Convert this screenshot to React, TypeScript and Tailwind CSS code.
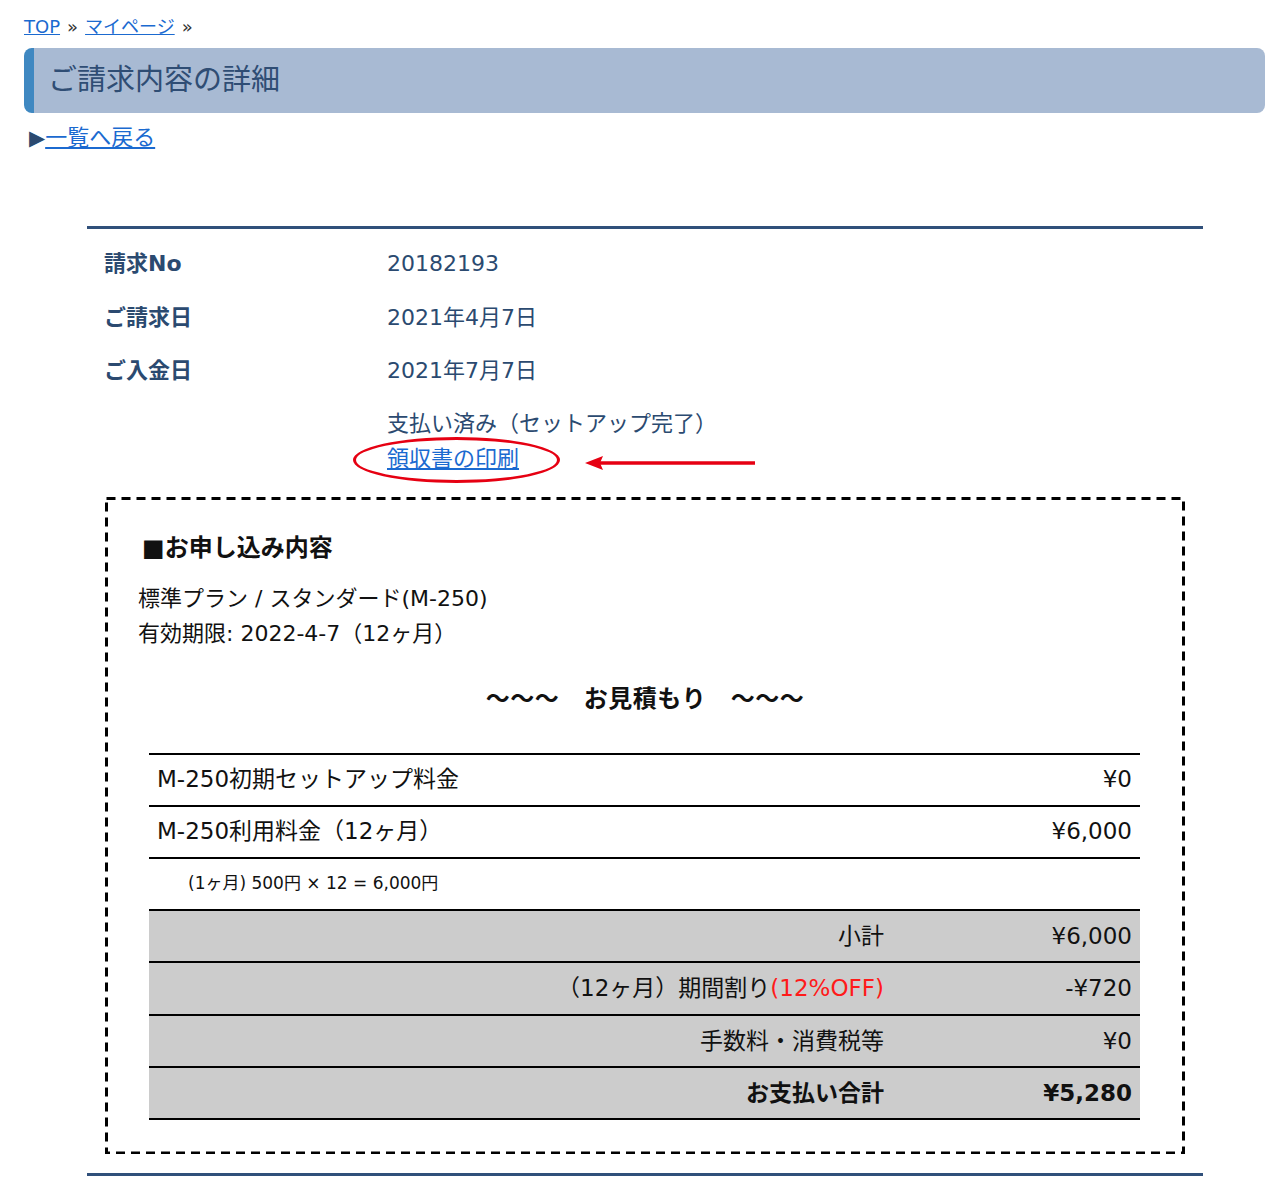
import React from "react";

const font = { fontFamily: '"DejaVu Sans", "Noto Sans CJK JP", sans-serif' };

function InfoRow({ label, value }: { label: string; value: string }) {
  return (
    <div className="flex h-[53.5px] items-center">
      <div className="w-[300px] pl-[17px] font-bold text-[22px] text-[#2b4a70]">{label}</div>
      <div className="text-[22px] text-[#2b4a70]">{value}</div>
    </div>
  );
}

function ItemRow({ label, amount }: { label: string; amount: string }) {
  return (
    <div className="flex h-[52px] items-center justify-between border-t-2 border-black px-[8px] text-[23px] text-[#111]">
      <span>{label}</span>
      <span>{amount}</span>
    </div>
  );
}

function SumRow({
  label,
  amount,
  bold,
  last,
}: {
  label: React.ReactNode;
  amount: string;
  bold?: boolean;
  last?: boolean;
}) {
  return (
    <div
      className={`flex h-[52.5px] items-center border-t-2 border-black bg-[#cccccc] text-[23px] text-[#111] ${
        last ? "h-[54px] border-b-2" : ""
      } ${bold ? "font-bold" : ""}`}
    >
      <div className="flex-1 text-right">{label}</div>
      <div className="w-[256px] pr-[8px] text-right">{amount}</div>
    </div>
  );
}

export default function App() {
  return (
    <div className="min-h-[1203px] w-full bg-white pb-[30px]" style={font}>
      {/* breadcrumb */}
      <div className="flex h-[48px] items-start pl-[24px] pt-[14px] text-[18px] leading-[26px] text-[#333]">
        <a href="#" className="text-[#1b6ad0] underline">TOP</a>
        <span className="mx-[7px]">»</span>
        <a href="#" className="text-[#1b6ad0] underline">マイページ</a>
        <span className="mx-[7px]">»</span>
      </div>

      {/* title */}
      <div className="ml-[24px] mr-[22px] flex h-[65px] items-center rounded-[8px] border-l-[10px] border-[#3f88c1] bg-[#a8bad3] pl-[14px]">
        <h1 className="text-[29px] font-normal text-[#2f4d74]">ご請求内容の詳細</h1>
      </div>

      {/* back link */}
      <div className="mt-[12px] flex items-center pl-[29px] text-[22px] leading-[26px]">
        <span className="text-[#2b4a70] text-[21px] leading-[26px]">▶</span>
        <a href="#" className="text-[#1b6ad0] underline">一覧へ戻る</a>
      </div>

      {/* main section */}
      <div className="ml-[87px] mr-[84px] mt-[75px] border-t-[3px] border-[#30507a] pt-[8px]">
        <InfoRow label="請求No" value="20182193" />
        <InfoRow label="ご請求日" value="2021年4月7日" />
        <InfoRow label="ご入金日" value="2021年7月7日" />
        <div className="flex pt-[8px]">
          <div className="w-[300px]" />
          <div className="text-[22px] leading-[35px] text-[#2b4a70]">
            <div>支払い済み（セットアップ完了）</div>
            <div>
              <span className="relative inline-block">
                <a href="#" className="text-[#1b6ad0] underline">領収書の印刷</a>
                <span className="pointer-events-none absolute left-[-34px] top-[-4px] h-[46px] w-[207px] rounded-[50%] border-[3px] border-[#e60012]" />
                <svg
                  className="absolute left-[198px] top-[14px]"
                  width="172"
                  height="16"
                  viewBox="0 0 172 16"
                >
                  <line x1="14" y1="8" x2="170" y2="8" stroke="#e60012" strokeWidth="3.5" />
                  <polygon points="0,8 18,1 15,8 18,15" fill="#e60012" />
                </svg>
              </span>
            </div>
          </div>
        </div>

        {/* dashed box */}
        <div className="relative mx-[18px] mt-[21px] px-[37px] pb-[34px] pt-[35px]">
          <svg className="pointer-events-none absolute inset-0 h-full w-full" preserveAspectRatio="none">
            <rect
              x="1.5"
              y="1.5"
              width="calc(100% - 3px)"
              height="calc(100% - 3px)"
              fill="none"
              stroke="#000"
              strokeWidth="3"
              strokeDasharray="9 6"
            />
          </svg>
          <div className="text-[24px] font-bold leading-[32px] text-[#111]">■お申し込み内容</div>
          <div className="mt-[17px] -ml-[4px] text-[22px] leading-[35px] text-[#111]">
            <div>標準プラン / スタンダード(M-250)</div>
            <div>有効期限: 2022-4-7（12ヶ月）</div>
          </div>
          <div className="mt-[30px] text-center text-[24px] font-bold leading-[36px] tracking-[0.5px] text-[#111]">
            ～～～　お見積もり　～～～
          </div>

          <div className="ml-[7px] mr-[8px] mt-[36px]">
            <ItemRow label="M-250初期セットアップ料金" amount="¥0" />
            <ItemRow label="M-250利用料金（12ヶ月）" amount="¥6,000" />
            <div className="flex h-[52px] items-center border-t-2 border-black pl-[39px] text-[17px] text-[#111]">
              (1ヶ月) 500円 × 12 = 6,000円
            </div>
            <SumRow label="小計" amount="¥6,000" />
            <SumRow
              label={
                <>
                  （12ヶ月）期間割り<span className="text-[#ff1a1a]">(12%OFF)</span>
                </>
              }
              amount="-¥720"
            />
            <SumRow label="手数料・消費税等" amount="¥0" />
            <SumRow label="お支払い合計" amount="¥5,280" bold last />
          </div>
        </div>

        <div className="mt-[19px] border-t-[3px] border-[#30507a]" />
      </div>
    </div>
  );
}
